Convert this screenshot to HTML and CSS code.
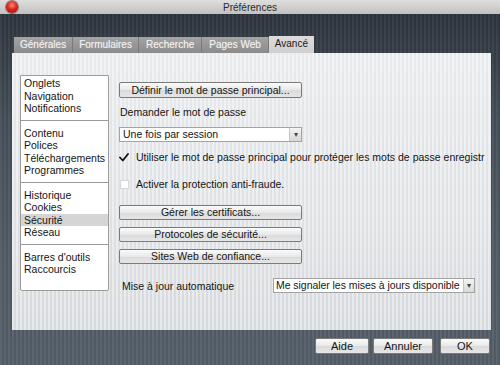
FILE: index.html
```html
<!DOCTYPE html>
<html lang="fr">
<head>
  <meta charset="UTF-8">
  <title>Préférences</title>
  <link rel="stylesheet" href="styles.css">
</head>
<body>
  <div class="window">
    <div class="titlebar">
      <span class="close"></span>
      <span class="title">Préférences</span>
    </div>

    <div class="tabs">
      <span class="tab">Générales</span>
      <span class="tab">Formulaires</span>
      <span class="tab">Recherche</span>
      <span class="tab">Pages Web</span>
      <span class="tab active">Avancé</span>
    </div>

    <div class="panel">
      <div class="sidebar">
        <ul class="group first">
          <li>Onglets</li>
          <li>Navigation</li>
          <li>Notifications</li>
        </ul>
        <ul class="group">
          <li>Contenu</li>
          <li>Polices</li>
          <li>Téléchargements</li>
          <li>Programmes</li>
        </ul>
        <ul class="group">
          <li>Historique</li>
          <li>Cookies</li>
          <li class="selected">Sécurité</li>
          <li>Réseau</li>
        </ul>
        <ul class="group">
          <li>Barres d'outils</li>
          <li>Raccourcis</li>
        </ul>
      </div>

      <div class="content">
        <button class="btn btn-master">Définir le mot de passe principal...</button>
        <div class="label ask">Demander le mot de passe</div>
        <div class="select select-session">
          <span class="select-value">Une fois par session</span>
          <span class="select-arrow">▾</span>
        </div>
        <div class="check-row checked">
          <svg class="check" width="10" height="9" viewBox="0 0 10 9">
            <path d="M1 4.5 L3.8 7.5 L9 1" fill="none" stroke="#111" stroke-width="1.8" stroke-linecap="round" stroke-linejoin="round"></path>
          </svg>
          <span>Utiliser le mot de passe principal pour protéger les mots de passe enregistr</span>
        </div>
        <div class="check-row unchecked">
          <span class="box"></span>
          <span>Activer la protection anti-fraude.</span>
        </div>
        <button class="btn btn-certs">Gérer les certificats...</button>
        <button class="btn btn-gap">Protocoles de sécurité...</button>
        <button class="btn btn-gap">Sites Web de confiance...</button>
        <div class="update-row">
          <span class="label">Mise à jour automatique</span>
          <div class="select select-update">
            <span class="select-value">Me signaler les mises à jours disponible</span>
            <span class="select-arrow">▾</span>
          </div>
        </div>
      </div>
    </div>

    <div class="footer">
      <button class="btn btn-foot btn-help">Aide</button>
      <button class="btn btn-foot btn-cancel">Annuler</button>
      <button class="btn btn-foot btn-ok">OK</button>
    </div>
  </div>
</body>
</html>
```

FILE: styles.css
```css
* {
  box-sizing: border-box;
  margin: 0;
  padding: 0;
}

body {
  width: 500px;
  height: 365px;
  overflow: hidden;
  font-family: "Liberation Sans", Arial, sans-serif;
  font-size: 10.5px;
  color: #151515;
}

.window {
  height: 365px;
  display: flex;
  flex-direction: column;
  background:
    repeating-linear-gradient(90deg, rgba(255, 255, 255, 0.04) 0 2px, rgba(0, 0, 0, 0.06) 2px 4px),
    linear-gradient(#2a3139 0, #343c45 40px, #46505a 120px, #535d67 260px, #56606a 100%);
}

.titlebar {
  position: relative;
  height: 14px;
  display: flex;
  align-items: center;
  justify-content: center;
  background: linear-gradient(#dedede, #c2c1c0);
}

.close {
  position: absolute;
  left: 6px;
  top: 1px;
  width: 12px;
  height: 12px;
  border-radius: 50%;
  background: radial-gradient(circle at 50% 35%, #ff8a80 0, #e0261b 45%, #8e0d07 100%);
  box-shadow: 0 0 0 1px rgba(90, 20, 20, 0.5);
}

.title {
  font-size: 10px;
  color: #2b2b2b;
}

/* tabs */
.tabs {
  display: flex;
  align-items: flex-end;
  height: 17px;
  margin: 22px 0 0 14px;
}

.tab {
  height: 16px;
  padding: 0 6px;
  line-height: 16px;
  font-size: 10px;
  color: #f2f2f2;
  text-shadow: 0 0 1px rgba(255, 255, 255, 0.4);
  background: linear-gradient(#a4a4a4, #8b8b8b);
  border-right: 1px solid #7b7b7b;
}

.tab:nth-child(3),
.tab:nth-child(4) {
  padding: 0 7px;
}

.tab.active {
  height: 17px;
  padding: 0 6px;
  line-height: 15px;
  color: #1a1a1a;
  text-shadow: none;
  background: linear-gradient(#dcdcdc, #cfcfcf);
  border-right: none;
}

/* panel */
.panel {
  display: flex;
  gap: 10px;
  height: 277px;
  margin: 0 9px 0 12px;
  padding: 22px 5px 0 8px;
  background:
    repeating-linear-gradient(90deg, rgba(255, 255, 255, 0.35) 0 2px, rgba(0, 0, 0, 0.015) 2px 4px),
    linear-gradient(#ebedef, #e2e5e8 60%, #d9dce0);
}

.sidebar {
  flex: 0 0 89px;
  height: 216px;
  background: #fff;
  border: 1px solid #9c9c9c;
  border-radius: 0 0 2px 2px;
}

.group {
  list-style: none;
  padding: 6px 0 5px;
  border-top: 1px solid #9a9a9a;
}

.group.first {
  padding-top: 1px;
  border-top: none;
}

.group li {
  height: 12.5px;
  line-height: 12.5px;
  padding-left: 3px;
  white-space: nowrap;
}

.group li.selected {
  background: #d5d5d5;
}

.content {
  flex: 1;
  min-width: 0;
  overflow: hidden;
  display: flex;
  flex-direction: column;
  align-items: flex-start;
}

.btn {
  width: 183px;
  height: 15px;
  border: 1px solid #7a7a7a;
  border-radius: 2px;
  background: linear-gradient(#fbfbfb, #e8e8e8 50%, #dadada 51%, #e6e6e6);
  font: inherit;
  color: #151515;
  line-height: 13px;
  text-align: center;
}

.btn-master {
  height: 16px;
  margin-top: 7px;
}

.label {
  line-height: 14px;
  white-space: nowrap;
}

.ask {
  margin-top: 7px;
  padding-left: 1px;
}

.select {
  display: flex;
  height: 15px;
  background: #fff;
  border: 1px solid #a3a3a3;
  line-height: 13px;
  white-space: nowrap;
}

.select-value {
  flex: 1;
  min-width: 0;
  overflow: hidden;
  padding-left: 3px;
}

.select-arrow {
  width: 12px;
  text-align: center;
  font-size: 8px;
  color: #444;
  background: linear-gradient(#f4f4f4, #d8d8d8);
  border-left: 1px solid #c4c4c4;
}

.select-session {
  width: 183px;
  margin-top: 8px;
}

.check-row {
  display: flex;
  align-items: center;
  gap: 7px;
  height: 14px;
  white-space: nowrap;
}

.checked {
  margin-top: 8px;
}

.unchecked {
  margin-top: 13px;
  padding-left: 1px;
}

.box {
  width: 9px;
  height: 9px;
  background: #fff;
  border: 1px solid #d6d6d6;
}

.btn-certs {
  margin-top: 14px;
}

.btn-gap {
  margin-top: 7px;
}

.update-row {
  display: flex;
  align-items: center;
  margin-top: 14px;
}

.update-row .label {
  width: 154px;
  padding-left: 3px;
}

.select-update {
  width: 202px;
}

.select-update .select-value {
  padding-left: 2px;
  letter-spacing: -0.05px;
}

.select-update .select-arrow {
  width: 11px;
}

/* footer */
.footer {
  display: flex;
  justify-content: flex-end;
  gap: 4px;
  padding: 8px 10px 0 0;
}

.btn-foot {
  height: 16px;
  font-size: 11px;
}

.btn-help {
  width: 54px;
}

.btn-cancel {
  width: 60px;
}

.btn-ok {
  width: 50px;
  margin-left: 3px;
}
```
